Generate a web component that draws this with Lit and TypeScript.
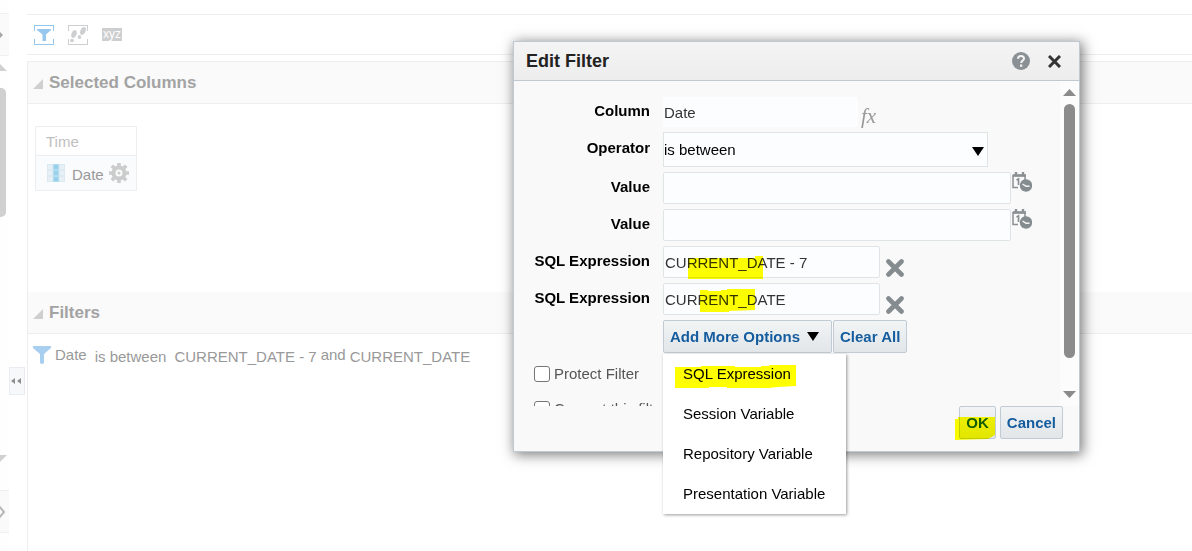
import { LitElement, html, css, svg } from "lit";
import { customElement, state } from "lit/decorators.js";

const funnel = svg`<path d="M0 0H18V2L11 8V17Q9 19 7 17V8L0 2Z"/>`;

@customElement("criteria-page")
class CriteriaPage extends LitElement {
  static styles = css`
    :host { display: flex; min-height: 100vh; color: #999; font-size: 15px; line-height: 18px; }
    svg { display: block; flex: none; }
    button { font: inherit; border: 0; padding: 0; background: none; }
    .rail { width: 9px; flex: none; display: flex; flex-direction: column; padding-top: 13px; box-sizing: border-box; background: #fefefe; }
    .band { height: 41px; border: solid #f0f0f0; border-width: 1px 0; background: #fafafa; display: flex; align-items: center; overflow: hidden; }
    .rail-scroll { height: 434px; padding: 8px 0 27px; display: flex; flex-direction: column; box-sizing: border-box; }
    .thumb { width: 6px; height: 129px; margin: 16px 0 auto; border-radius: 0 5px 5px 0; background: #d0d0d0; }
    .gutter { width: 18px; flex: none; padding-top: 367px; box-sizing: border-box; }
    .collapse { width: 16px; height: 28px; border: 1px solid #e9ecf0; background: #f6f8fa; display: grid; place-items: center; }
    .main { flex: 1; min-width: 0; display: flex; flex-direction: column; padding-top: 14px; }
    .toolbar { height: 39px; border: solid #eee; border-width: 1px 0; display: flex; align-items: center; gap: 14px; padding-left: 7px; margin-bottom: 6px; }
    .xyz { overflow: visible; }
    .section { border-left: 1px solid #eee; }
    .grow { flex: 1; }
    .bar { margin: 0; height: 41px; display: flex; align-items: center; gap: 6px; padding-left: 5px; background: #fafafa; border-bottom: 1px solid #eee; color: #a3a3a3; font-size: 17px; line-height: 20px; font-weight: bold; }
    .bar.top { border-top: 1px solid #eee; }
    .columns { height: 188px; box-sizing: border-box; padding: 22px 7px; }
    .card { width: 100px; border: 1px solid #eceef0; }
    .folder { height: 29px; box-sizing: border-box; padding: 1px 0 0 10px; display: flex; align-items: center; color: #bfbfbf; border-bottom: 1px solid #eceef0; }
    .item { height: 34px; display: flex; align-items: center; gap: 5px; padding-left: 11px; background: #f9fbfd; }
    .name { padding-top: 3px; }
    .filters { display: flex; align-items: flex-start; padding: 12px 5px; gap: 8px; white-space: nowrap; }
    .filters .name { padding-top: 2px; }
    .first { display: flex; gap: 4px; }
    .tight { display: flex; gap: 4px; }
  `;

  render() {
    return html`
      <div class="rail">
        <div class="band"><svg width="3" height="8" fill="#a5a5a5"><path d="M0 1L3 4L0 7Z" /></svg></div>
        <div class="rail-scroll">
          <svg width="8" height="8" fill="#d0d0d0"><path d="M0 0L7 7H0Z" /></svg>
          <div class="thumb"></div>
          <svg width="8" height="8" fill="#d0d0d0"><path d="M0 0H7L0 7Z" /></svg>
        </div>
        <div class="band"><svg width="6" height="14" fill="none" stroke="#b5b5b5" stroke-width="2"><path d="M-1 1L4 7L-1 13" /></svg></div>
      </div>
      <div class="gutter">
        <button class="collapse" aria-label="Collapse pane">
          <svg width="12" height="8" fill="#8f8f8f"><path d="M4 1V7L0 4ZM10 1V7L6 4Z" /></svg>
        </button>
      </div>
      <div class="main">
        <div class="toolbar">
          <button aria-label="Filters pane">
            <svg width="20" height="20" fill="#98c7ee">
              <path d="M0 0H20V6H19V1H1V6H0ZM0 14H1V19H19V14H20V20H0Z" />
              <path d="M3 4H17V5L12 9.500V16H8.500V9.500L3 5Z" />
            </svg>
          </button>
          <button aria-label="Selection steps">
            <svg width="20" height="20" fill="#cecfd0">
              <path d="M0 0H20V6H19V1H1V6H0ZM0 14H1V19H19V14H20V20H0Z" />
              <ellipse cx="6" cy="9" rx="2.500" ry="4" transform="rotate(22 6 9)" />
              <ellipse cx="4" cy="15.500" rx="1.900" ry="1.700" />
              <ellipse cx="15" cy="6" rx="2.600" ry="4" transform="rotate(25 15 6)" />
              <ellipse cx="11.500" cy="12" rx="1.800" ry="2.100" />
            </svg>
          </button>
          <button aria-label="Format results">
            <svg class="xyz" width="20" height="13"><rect width="20" height="13" fill="#cdcecf" />
              <text x="10" y="10" text-anchor="middle" font-size="12" fill="#fff" font-family="Liberation Sans, sans-serif">xyz</text></svg>
          </button>
        </div>
        <section class="section">
          <h2 class="bar top"><svg width="10" height="12" fill="#cfcfcf"><path d="M10 2V12H0Z" /></svg>Selected Columns</h2>
          <div class="columns">
            <div class="card">
              <div class="folder">Time</div>
              <div class="item">
                <svg width="20" height="18">
                  ${[0, 1, 2].map((r) => [0, 1, 2].map((c) => svg`<rect x=${c * 6 + 0.5} y=${r * 6 + 0.5} width="5" height="5" fill=${c === 1 ? "#98d0ea" : "#e6f0f6"} stroke=${c === 1 ? "#b5def0" : "#dce9f1"}></rect>`))}
                </svg>
                <span class="name">Date</span>
                <svg width="20" height="20" viewBox="-10 -10 20 20" fill="none" stroke="#ccc">
                  <circle r="5.500" stroke-width="4" /><circle r="1.500" fill="#ccc" stroke="none" />
                  <path stroke-width="3.600" d="M0 -6V-10M0 6V10M6 0H10M-6 0H-10M4.400 4.400L7.200 7.200M-4.400 4.400L-7.200 7.200M4.400 -4.400L7.200 -7.200M-4.400 -4.400L-7.200 -7.200" />
                </svg>
              </div>
            </div>
          </div>
        </section>
        <section class="section grow">
          <h2 class="bar"><svg width="10" height="12" fill="#cfcfcf"><path d="M10 2V12H0Z" /></svg>Filters</h2>
          <div class="filters">
            <span class="first"><svg width="18" height="20" fill="#a9cff0">${funnel}</svg><span>Date</span></span>
            <span class="name">is between</span>
            <span class="tight"><span class="name">CURRENT_DATE - 7</span><span>and</span><span class="name">CURRENT_DATE</span></span>
          </div>
        </section>
      </div>
    `;
  }
}

@customElement("edit-filter-dialog")
class EditFilterDialog extends LitElement {
  @state() expressions = ["CURRENT_DATE - 7", "CURRENT_DATE"];

  static styles = css`
    :host { display: flex; flex-direction: column; width: 565px; border: 1px solid #c0c9d1; background: #f9f9f9; box-shadow: 2px 2px 12px 1px rgba(0, 0, 0, 0.5); font-size: 15px; line-height: 18px; isolation: isolate; }
    svg { display: block; flex: none; }
    button, input, select { font: inherit; box-sizing: border-box; margin: 0; }
    .icon { border: 0; padding: 0; background: none; }
    .head { height: 38px; display: flex; align-items: center; padding: 0 18px 0 12px; background: linear-gradient(#f4f4f4, #ededed); border-bottom: 1px solid #c0c9d1; }
    .head h1 { margin: 0 auto 0 0; font-size: 18px; line-height: 20px; color: #222; }
    .tools { display: flex; align-items: center; gap: 18px; }
    .body { height: 325px; display: flex; overflow: hidden; }
    .form { flex: 1; min-width: 0; padding-top: 16px; display: flex; flex-direction: column; gap: 5px; }
    .row { display: grid; grid-template-columns: 136px 1fr; column-gap: 13px; align-items: center; }
    .row > label { text-align: right; font-weight: bold; color: #000; padding-bottom: 3px; }
    .cell { display: flex; align-items: flex-start; gap: 1px; }
    .cell.low { gap: 6px; }
    .field { height: 32px; border: 1px solid #dfe4e7; border-radius: 2px; background: #fcfdfe; color: #333; padding: 0 1px; }
    .wide { width: 348px; }
    .mid { width: 217px; }
    .plain { width: 195px; height: 30px; border: 0; }
    .pick { position: relative; }
    .pick select { display: block; appearance: none; width: 325px; height: 35px; border: 1px solid #dfe4e7; border-radius: 0; background: #fcfdfe; color: #000; padding: 0; }
    .pick svg { position: absolute; right: 4px; top: 15px; pointer-events: none; }
    .fx { align-self: flex-end; padding-left: 2px; font: italic 21px/22px "Liberation Serif", serif; color: #999; }
    .low .icon { align-self: flex-end; padding-bottom: 1px; }
    .actions { display: flex; gap: 1px; padding-left: 149px; }
    .btn { height: 33px; padding: 0 6px; display: flex; align-items: center; gap: 7px; border: 1px solid #c0cbd5; border-radius: 2px; background: linear-gradient(#f2f4f5, #e2e6e9); color: #145c9e; font-weight: bold; white-space: nowrap; }
    .more { padding-right: 12px; }
    .checks { display: flex; flex-direction: column; gap: 17px; padding: 7px 0 0 20px; color: #555; }
    .check { display: flex; align-items: center; gap: 4px; height: 18px; white-space: nowrap; }
    .check input { appearance: none; width: 16px; height: 16px; border: 1px solid #767676; border-radius: 3px; background: #fff; }
    .scroll { width: 19px; background: #fcfcfc; display: flex; flex-direction: column; align-items: center; padding: 8px 0; box-sizing: border-box; }
    .thumb { width: 11px; height: 254px; border-radius: 6px; background: #8b8b8b; margin: 8px 0 auto; }
    .foot { display: flex; justify-content: flex-end; gap: 4px; padding: 0 16px 12px; }
    .menu { position: absolute; left: 149px; top: 312px; width: 183px; box-sizing: border-box; margin: 0; padding: 0; list-style: none; background: #fff; box-shadow: 1px 1px 3px rgba(0, 0, 0, 0.4); }
    .menu button { display: block; width: 100%; height: 40px; padding: 0 20px; border: 0; background: none; text-align: left; color: #000; white-space: nowrap; }
    .marks { position: absolute; left: 0; top: 0; mix-blend-mode: multiply; pointer-events: none; }
  `;

  private dateIcon = svg`
    <svg width="20" height="20" fill="none" stroke="#8a9094">
      <path stroke-width="1.500" d="M13 8V3.500H1V15.500H6"/><path stroke-width="2.600" d="M1 3.500H14"/>
      <path stroke-width="2.400" d="M4 0V4M11 0V4"/><path stroke-width="1.700" d="M4.500 8L6.500 7V13"/>
      <circle cx="14" cy="13.500" r="6.200" fill="#858c90" stroke="none"/><path stroke="#f5f5f5" stroke-width="1.400" d="M10.500 12L14 14.200H17.500"/>
    </svg>`;

  private down = svg`<svg width="12" height="9" fill="#000"><path d="M0 0H12L6 9Z"/></svg>`;

  render() {
    return html`
      <header class="head">
        <h1>Edit Filter</h1>
        <div class="tools">
          <button class="icon" aria-label="Help">
            <svg width="18" height="18"><circle cx="9" cy="9" r="9" fill="#8a9094" />
              <path d="M6 6.800Q6 4 9 4T12 6.500C12 8.500 9.200 8.500 9.200 11" fill="none" stroke="#f4f4f4" stroke-width="2" /><rect x="8" y="12.500" width="2.300" height="2.300" fill="#f4f4f4" /></svg>
          </button>
          <button class="icon" aria-label="Close">
            <svg width="13" height="13" stroke="#333" stroke-width="3"><path d="M1 1L12 12M12 1L1 12" /></svg>
          </button>
        </div>
      </header>
      <div class="body">
        <div class="form">
          <div class="row"><label for="column">Column</label>
            <div class="cell"><input id="column" class="field plain" readonly value="Date" /><button class="icon fx" aria-label="Edit formula">fx</button></div></div>
          <div class="row"><label for="operator">Operator</label>
            <div class="cell"><div class="pick"><select id="operator"><option>is between</option></select>${this.down}</div></div></div>
          ${["from", "to"].map((id) => html`
            <div class="row"><label for=${id}>Value</label>
              <div class="cell"><input id=${id} class="field wide" /><button class="icon" aria-label="Pick date">${this.dateIcon}</button></div></div>`)}
          ${this.expressions.map((text, i) => html`
            <div class="row"><label for="sql${i}">SQL Expression</label>
              <div class="cell low"><input id="sql${i}" class="field mid" .value=${text} />
                <button class="icon" aria-label="Remove"><svg width="18" height="18" stroke="#858c90" stroke-width="4.600" stroke-linecap="round"><path d="M2.500 2.500L15.500 15.500M15.500 2.500L2.500 15.500" /></svg></button></div></div>`)}
          <div class="actions">
            <button class="btn more">Add More Options ${this.down}</button>
            <button class="btn">Clear All</button>
          </div>
          <div class="checks">
            <label class="check"><input type="checkbox" />Protect Filter</label>
            <label class="check"><input type="checkbox" />Convert this filter to SQL</label>
          </div>
        </div>
        <div class="scroll">
          <svg width="13" height="7" fill="#8b8b8b"><path d="M6.500 0L13 7H0Z" /></svg>
          <div class="thumb"></div>
          <svg width="13" height="7" fill="#8b8b8b"><path d="M0 0H13L6.500 7Z" /></svg>
        </div>
      </div>
      <footer class="foot"><button class="btn">OK</button><button class="btn">Cancel</button></footer>
      <ul class="menu">
        ${["SQL Expression", "Session Variable", "Repository Variable", "Presentation Variable"].map((t) => html`<li><button>${t}</button></li>`)}
      </ul>
      <svg class="marks" width="566" height="410" viewBox="514 42 566 410" fill="#ff0" aria-hidden="true">
        <path d="M688 258H755V256H763V279H688Z" />
        <path d="M700 290H708V291H721V290H727V289H755V310L729 311V312H700Z" />
        <path d="M675 367H701V366H735V367H761V366H769V365H796V386L777 387L769 388H727V387H709V388H675Z" />
        <path d="M955 419H958V417H995V435L988 439L955 440Z" />
      </svg>
    `;
  }
}

@customElement("app-root")
class AppRoot extends LitElement {
  static styles = css`
    :host { display: block; position: relative; min-height: 100vh; overflow: hidden; background: #fff; font-family: "Liberation Sans", Arial, sans-serif; }
    .dialog { position: absolute; left: 513px; top: 41px; }
  `;

  render() {
    return html`<criteria-page></criteria-page><edit-filter-dialog class="dialog" role="dialog" aria-label="Edit Filter"></edit-filter-dialog>`;
  }
}
